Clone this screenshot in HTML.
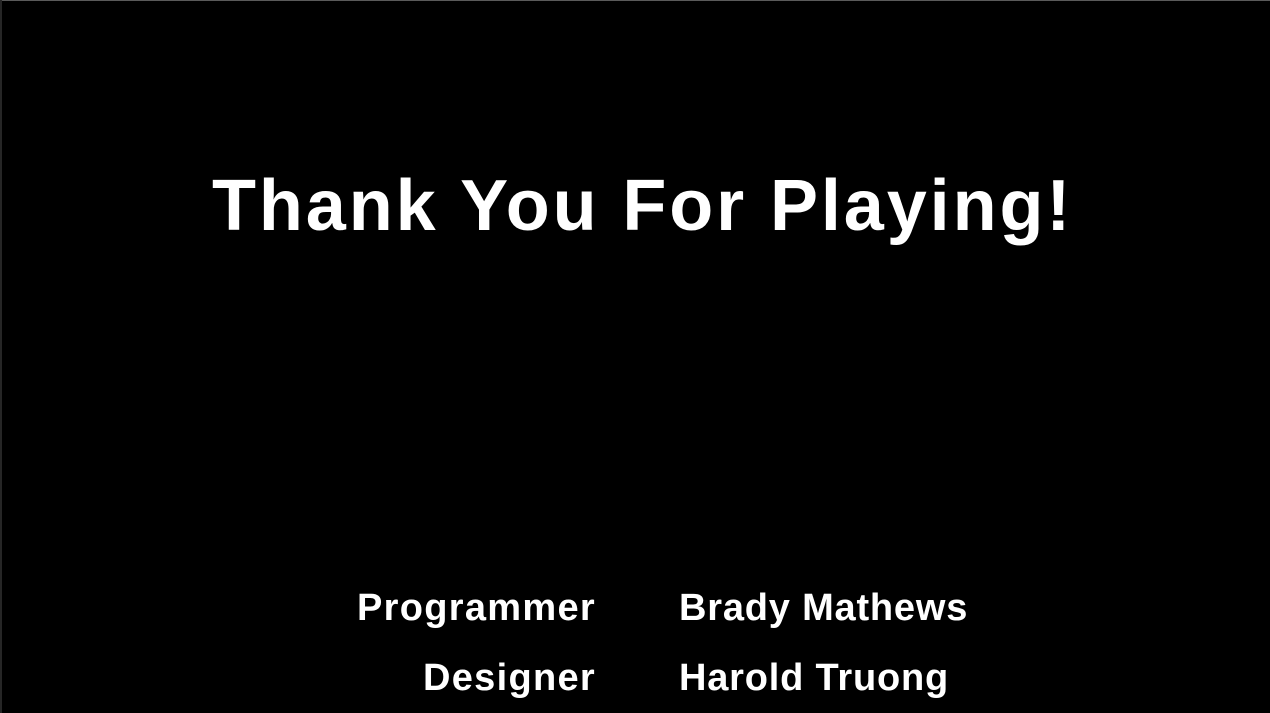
<!DOCTYPE html>
<html><head><style>
html,body{margin:0;padding:0;background:#000;}
body{width:1270px;height:713px;position:relative;overflow:hidden;font-family:"Liberation Sans",sans-serif;font-weight:bold;color:#fff;}
.top{position:absolute;left:0;top:0;width:1270px;height:1px;background:#5a5a5a;}
.left{position:absolute;left:0;top:0;width:2px;height:713px;background:#262626;}
.t{position:absolute;white-space:nowrap;line-height:1;}
</style></head><body>
<div class="top"></div><div class="left"></div>
<div class="t" style="left:212px;top:170px;font-size:72px;letter-spacing:2.9px;">Thank You For Playing!</div>
<div class="t" style="right:674px;top:589px;font-size:38px;letter-spacing:1.3px;">Programmer</div>
<div class="t" style="left:679px;top:589px;font-size:38px;letter-spacing:0.8px;">Brady Mathews</div>
<div class="t" style="right:674px;top:659px;font-size:38px;letter-spacing:1.3px;">Designer</div>
<div class="t" style="left:679px;top:659px;font-size:38px;letter-spacing:0.8px;">Harold Truong</div>
</body></html>
